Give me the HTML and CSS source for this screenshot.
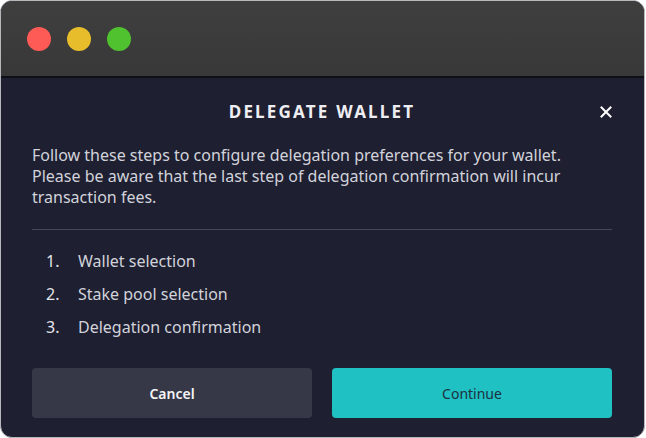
FILE: index.html
```html
<!DOCTYPE html>
<html>
<head>
    <title>Delegate Wallet</title>
    <link rel="stylesheet" href="styles.css">
</head>
<body>
    <div class="window">
        <div class="titlebar">
            <span class="dot red"></span>
            <span class="dot yellow"></span>
            <span class="dot green"></span>
        </div>
        <div class="dialog">
            <div class="dialog-header">
                <h1>DELEGATE WALLET</h1>
                <button class="close" aria-label="Close">
                    <svg width="12" height="12" viewBox="0 0 12 12">
                        <path d="M1.5 1.5 L10.5 10.5 M10.5 1.5 L1.5 10.5" stroke="#fff" stroke-width="2" stroke-linecap="square"/>
                    </svg>
                </button>
            </div>
            <p class="intro">Follow these steps to configure delegation preferences for your wallet. Please be aware that the last step of delegation confirmation will incur transaction fees.</p>
            <hr class="divider">
            <ol class="steps">
                <li><span class="num">1.</span>Wallet selection</li>
                <li><span class="num">2.</span>Stake pool selection</li>
                <li><span class="num">3.</span>Delegation confirmation</li>
            </ol>
            <div class="actions">
                <button class="btn cancel">Cancel</button>
                <button class="btn continue">Continue</button>
            </div>
        </div>
    </div>
</body>
</html>
```

FILE: styles.css
```css
html, body {
    margin: 0;
    padding: 0;
    background-color: #fff;
}
body {
    font-family: "Noto Sans", "Open Sans", sans-serif;
    width: 646px;
    height: 438px;
}
.window {
    box-sizing: border-box;
    width: 645px;
    height: 438px;
    border: 1px solid #b8b8bc;
    border-radius: 12px;
    overflow: hidden;
    display: flex;
    flex-direction: column;
    background-color: #1e1f31;
}
.titlebar {
    height: 75px;
    background: linear-gradient(#3f3f3f, #383838);
    border-bottom: 2px solid #101014;
    display: flex;
    align-items: center;
    gap: 16px;
    padding-left: 26px;
    flex-shrink: 0;
}
.dot {
    width: 24px;
    height: 24px;
    border-radius: 50%;
    margin-top: 1px;
}
.red { background-color: #fe5b56; }
.yellow { background-color: #e7bd2b; }
.green { background-color: #50c22f; }
.dialog {
    padding: 0 32px 0 31px;
    color: #d2d3da;
}
.dialog-header {
    position: relative;
    height: 67px;
    display: flex;
    align-items: center;
    justify-content: center;
}
.dialog-header h1 {
    margin: 0;
    font-size: 17px;
    font-weight: 700;
    letter-spacing: 2.2px;
    color: #eeeef2;
    line-height: 20px;
}
.close {
    position: absolute;
    right: 0;
    top: 28px;
    background: none;
    border: none;
    padding: 0;
    width: 12px;
    height: 12px;
    cursor: pointer;
}
.close svg {
    display: block;
}
.intro {
    margin: 0;
    font-size: 16px;
    line-height: 21px;
}
.divider {
    border: none;
    border-top: 1px solid #464859;
    margin: 21px 0 0 0;
}
.steps {
    list-style: none;
    margin: 15px 0 0 0;
    padding: 0 0 0 14px;
    font-size: 16px;
}
.steps li {
    height: 33px;
    line-height: 33px;
    display: flex;
}
.num {
    width: 32px;
    color: #e4e5ea;
}
.actions {
    display: flex;
    gap: 20px;
    margin-top: 24px;
}
.btn {
    flex: 1;
    height: 50px;
    border: none;
    border-radius: 4px;
    font-family: "Noto Sans", "Open Sans", sans-serif;
    font-size: 14px;
    cursor: pointer;
}
.cancel {
    background-color: #373847;
    color: #f4f4f6;
    font-weight: 600;
}
.continue {
    background-color: #1fc1c3;
    color: #1d3140;
}
```
